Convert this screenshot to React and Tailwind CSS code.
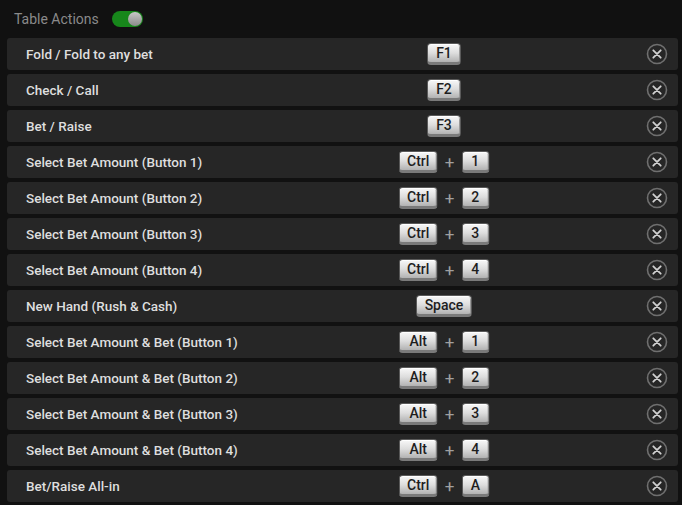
import React from 'react';

const rows = [
    { label: 'Fold / Fold to any bet', keys: ['F1'] },
    { label: 'Check / Call', keys: ['F2'] },
    { label: 'Bet / Raise', keys: ['F3'] },
    { label: 'Select Bet Amount (Button 1)', keys: ['Ctrl', '1'] },
    { label: 'Select Bet Amount (Button 2)', keys: ['Ctrl', '2'] },
    { label: 'Select Bet Amount (Button 3)', keys: ['Ctrl', '3'] },
    { label: 'Select Bet Amount (Button 4)', keys: ['Ctrl', '4'] },
    { label: 'New Hand (Rush & Cash)', keys: ['Space'] },
    { label: 'Select Bet Amount & Bet (Button 1)', keys: ['Alt', '1'] },
    { label: 'Select Bet Amount & Bet (Button 2)', keys: ['Alt', '2'] },
    { label: 'Select Bet Amount & Bet (Button 3)', keys: ['Alt', '3'] },
    { label: 'Select Bet Amount & Bet (Button 4)', keys: ['Alt', '4'] },
    { label: 'Bet/Raise All-in', keys: ['Ctrl', 'A'] },
];

function Key({ k }) {
    const width = k === 'Space' ? 'w-[56px]' : k.length > 2 ? 'w-[39px]' : k.length === 2 ? 'w-[34px]' : 'w-[28px]';
    return (
        <div className={`${width} h-[22px] rounded-[4px] border border-[#5a5a5a] border-b-[3px] border-b-[#7a7a7a] bg-gradient-to-b from-[#f8f8f8] via-[#dddddd] to-[#b2b2b2] flex items-center justify-center text-[14px] font-medium text-[#1e1e1e] leading-none shadow-[inset_0_1px_0_#ffffff,inset_-1px_0_0_#9a9a9a]`}>
            {k}
        </div>
    );
}

function CloseIcon() {
    return (
        <svg width="22" height="22" viewBox="0 0 22 22">
            <circle cx="11" cy="11" r="9.5" fill="none" stroke="#6f6f6f" strokeWidth="1.6" />
            <path d="M7.3 7.3 L14.7 14.7 M14.7 7.3 L7.3 14.7" stroke="#d0d0d0" strokeWidth="1.8" strokeLinecap="round" />
        </svg>
    );
}

export default function App() {
    return (
        <div className="w-[682px] h-[505px] bg-[#111111] overflow-hidden" style={{ fontFamily: 'Roboto, "Noto Sans", sans-serif' }}>
            {/* Header */}
            <div className="flex items-center h-[38px] pl-[14px] gap-[13px]">
                <span className="text-[14px] text-[#8a8a8a]">Table Actions</span>
                <div className="w-[31px] h-[16px] rounded-full bg-[#17871b] flex items-center justify-end pr-[1px]">
                    <div className="w-[14px] h-[14px] rounded-full bg-gradient-to-b from-[#c8c8c8] to-[#8a8a8a]" />
                </div>
            </div>

            {/* Rows */}
            <div className="flex flex-col gap-[4px] pl-[7px] pr-[4px]">
                {rows.map((row, i) => (
                    <div key={i} className="relative h-[32px] rounded-[3px] bg-[#262626] flex items-center pl-[19px] pr-[10px]">
                        <span className="text-[13.5px] font-medium text-[#dedede] pt-[1px]">{row.label}</span>
                        <div className="absolute left-[437px] top-0 h-full flex items-center -translate-x-1/2 gap-[7px]">
                            <Key k={row.keys[0]} />
                            {row.keys[1] && (
                                <>
                                    <span className="text-[#a0a0a0] text-[17px] leading-none">+</span>
                                    <Key k={row.keys[1]} />
                                </>
                            )}
                        </div>
                        <div className="ml-auto flex items-center">
                            <CloseIcon />
                        </div>
                    </div>
                ))}
            </div>
        </div>
    );
}
